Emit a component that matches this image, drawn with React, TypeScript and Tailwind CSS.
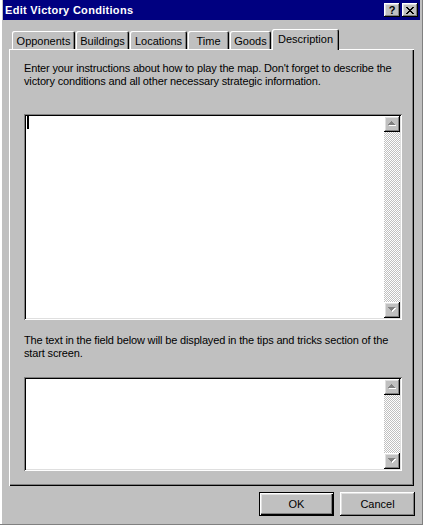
const raised =
  "shadow-[inset_-1px_-1px_#000,inset_1px_1px_#fff,inset_-2px_-2px_#808080,inset_2px_2px_#dfdfdf]";
const sunken =
  "shadow-[inset_1px_1px_#808080,inset_-1px_-1px_#fff,inset_2px_2px_#000,inset_-2px_-2px_#dfdfdf]";

const tabs = [
  { label: "Opponents", w: "w-[63px]" },
  { label: "Buildings", w: "w-[53px]" },
  { label: "Locations", w: "w-[57px]" },
  { label: "Time", w: "w-[41px]" },
  { label: "Goods", w: "w-[41px]" },
];

function CloseGlyph() {
  const px = [
    [0, 0], [1, 0], [6, 0], [7, 0],
    [1, 1], [2, 1], [5, 1], [6, 1],
    [2, 2], [3, 2], [4, 2], [5, 2],
    [3, 3], [4, 3],
    [2, 4], [3, 4], [4, 4], [5, 4],
    [1, 5], [2, 5], [5, 5], [6, 5],
    [0, 6], [1, 6], [6, 6], [7, 6],
  ];
  return (
    <svg width="8" height="7" viewBox="0 0 8 7" shapeRendering="crispEdges">
      {px.map(([x, y]) => (
        <rect key={`${x}-${y}`} x={x} y={y} width="1" height="1" fill="#000" />
      ))}
    </svg>
  );
}

function Arrow({ down = false }: { down?: boolean }) {
  const pts = down ? "0,0 7,0 3.5,4" : "0,4 7,4 3.5,0";
  return (
    <svg width="9" height="6" viewBox="0 0 9 6" shapeRendering="crispEdges">
      <polygon points={pts} transform="translate(1,1)" fill="#fff" />
      <polygon points={pts} fill="#808080" />
    </svg>
  );
}

function ScrollBar() {
  return (
    <div className="flex w-[16px] flex-col">
      <div className={`flex h-[16px] w-[16px] items-center justify-center bg-[#c0c0c0] ${raised}`}>
        <Arrow />
      </div>
      <div className="flex-1 bg-[image:repeating-conic-gradient(#c0c0c0_0%_25%,#ffffff_0%_50%)] bg-[length:2px_2px]" />
      <div className={`flex h-[16px] w-[16px] items-center justify-center bg-[#c0c0c0] ${raised}`}>
        <Arrow down />
      </div>
    </div>
  );
}

function TextField({ height, caret = false }: { height: string; caret?: boolean }) {
  return (
    <div className={`flex ${height} bg-white p-[2px] ${sunken}`}>
      <div className="flex-1 pl-[1px]">
        {caret && <div className="h-[13px] w-[2px] bg-black" />}
      </div>
      <ScrollBar />
    </div>
  );
}

export default function App() {
  return (
    <div className="flex h-[525px] w-[423px] flex-col bg-[#c0c0c0] font-['Liberation_Sans',Arial,sans-serif] text-[11px] text-black shadow-[inset_-1px_-1px_#808080,inset_2px_0_#fff] select-none">
      {/* title bar */}
      <div className="mx-[3px] flex h-[20px] items-center bg-[#000080] pl-[2px] pr-[2px]">
        <span className="flex-1 text-[11px] font-bold tracking-[0.3px] text-white">Edit Victory Conditions</span>
        <div className={`flex h-[14px] w-[16px] items-center justify-center bg-[#c0c0c0] ${raised}`}>
          <span className="text-[11px] leading-none font-bold">?</span>
        </div>
        <div className={`ml-[2px] flex h-[14px] w-[16px] items-center justify-center bg-[#c0c0c0] ${raised}`}>
          <CloseGlyph />
        </div>
      </div>

      {/* tabs */}
      <div className="ml-[12px] flex h-[29px] items-end gap-[1px]">
        {tabs.map((t) => (
          <div
            key={t.label}
            className={`${t.w} flex h-[18px] items-center justify-center rounded-t-[2px] pt-[2px] shadow-[inset_1px_1px_#fff,inset_-1px_0_#000,inset_-2px_0_#808080]`}
          >
            {t.label}
          </div>
        ))}
        <div className="relative z-10 -mb-[1px] flex h-[21px] w-[67px] items-center justify-center rounded-t-[2px] bg-[#c0c0c0] pb-[1px] shadow-[inset_1px_1px_#fff,inset_-1px_0_#000,inset_-2px_0_#808080]">
          Description
        </div>
      </div>

      {/* tab panel */}
      <div className="mx-[9px] flex h-[437px] flex-col pl-[15px] pr-[12px] pt-[13px] shadow-[inset_1px_1px_#fff,inset_-1px_-1px_#000,inset_-2px_-2px_#808080]">
        <p className="whitespace-nowrap leading-[13px] tracking-[-0.15px]">
          Enter your instructions about how to play the map. Don't forget to describe the
          <br />
          victory conditions and all other necessary strategic information.
        </p>
        <div className="mt-[26px]">
          <TextField height="h-[206px]" caret />
        </div>
        <p className="mt-[14px] whitespace-nowrap leading-[13px] tracking-[-0.15px]">
          The text in the field below will be displayed in the tips and tricks section of the
          <br />
          start screen.
        </p>
        <div className="mt-[17px]">
          <TextField height="h-[94px]" />
        </div>
      </div>

      {/* buttons */}
      <div className="mt-[6px] flex justify-end gap-[6px] pr-[8px]">
        <button className="flex h-[24px] w-[75px] items-center justify-center bg-[#c0c0c0] shadow-[inset_0_0_0_1px_#000,inset_2px_2px_#fff,inset_-2px_-2px_#000,inset_-3px_-3px_#808080,inset_3px_3px_#dfdfdf]">
          OK
        </button>
        <button className={`flex h-[24px] w-[75px] items-center justify-center bg-[#c0c0c0] ${raised}`}>
          Cancel
        </button>
      </div>
    </div>
  );
}
